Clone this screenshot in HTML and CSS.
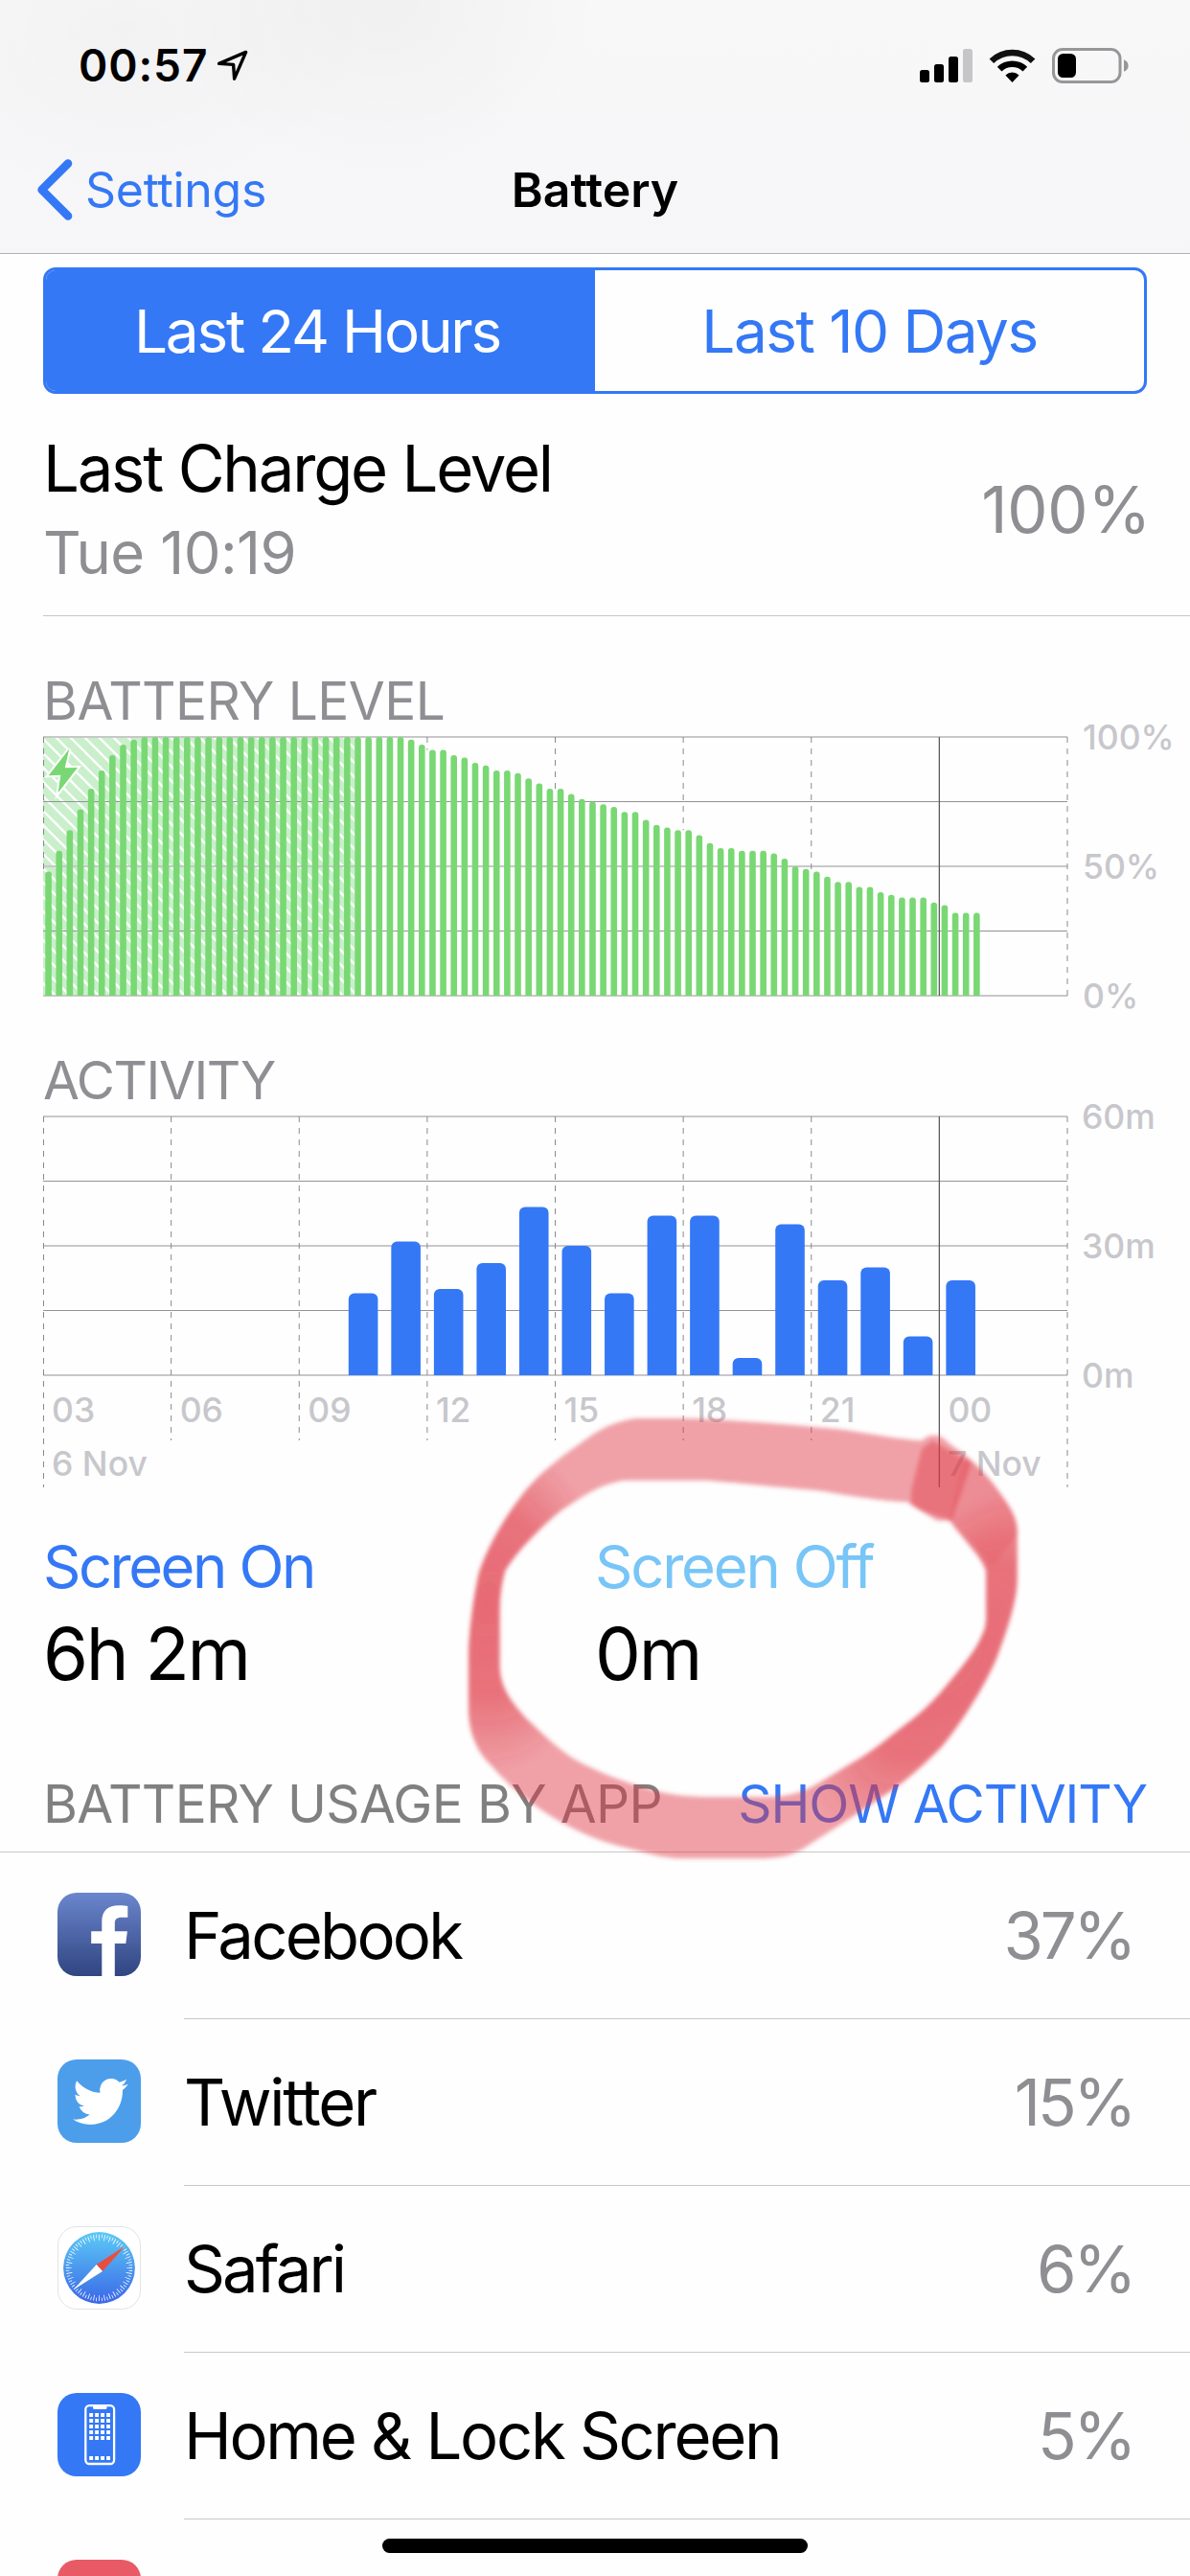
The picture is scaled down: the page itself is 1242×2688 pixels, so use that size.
FILE: index.html
```html
<!DOCTYPE html>
<html lang="en">
<head>
<meta charset="utf-8">
<title>Battery</title>
<link rel="stylesheet" href="styles.css">
</head>
<body>
<div class="screen">
  <header class="header">
    <div class="status">
      <div class="status-left">
        <span class="clock">00:57</span>
        <svg class="location" width="34" height="33" viewBox="0 0 34 33"><path d="M2.6 14.4 30.6 2.4 18.6 30.2 17.6 15.4Z" fill="none" stroke="#000" stroke-width="3.4" stroke-linejoin="round"/></svg>
      </div>
      <div class="status-right">
        <svg width="55" height="35" viewBox="0 0 55 35">
          <rect x="0" y="22" width="10" height="13" rx="2.5"/>
          <rect x="15" y="16" width="10" height="19" rx="2.5"/>
          <rect x="30" y="8" width="10" height="27" rx="2.5"/>
          <rect x="45" y="0" width="10" height="35" rx="2.5" fill="#c6c6c8"/>
        </svg>
        <svg class="wifi" width="49" height="37" viewBox="0 0 49 37">
          <path d="M0.6 11.4A34.5 34.5 0 0 1 48.4 11.4L43.8 16A28 28 0 0 0 5.2 16Z" fill="#111"/>
          <path d="M8.8 19.8A22.6 22.6 0 0 1 40.2 19.8L35.5 24.5A16 16 0 0 0 13.5 24.5Z"/>
          <path d="M17.4 28.4A10.4 10.4 0 0 1 31.6 28.4L24.5 36Z"/>
        </svg>
        <svg width="80" height="37" viewBox="0 0 80 37">
          <rect x="1.5" y="1.5" width="69.5" height="34" rx="9.5" fill="none" stroke="#979799" stroke-width="3"/>
          <rect x="6" y="6" width="19" height="25" rx="5.5"/>
          <path d="M75 12.2Q79.6 14.2 79.6 18.5 79.6 22.8 75 24.8Z" fill="#979799"/>
        </svg>
      </div>
    </div>
    <nav class="nav">
      <a class="back">
        <svg width="38" height="64" viewBox="0 0 38 64"><path d="M33 4.6 5.6 32 33 59.4" fill="none" stroke="#3478f6" stroke-width="8.6" stroke-linecap="round" stroke-linejoin="round"/></svg>
        <span>Settings</span>
      </a>
      <h1 class="nav-title">Battery</h1>
    </nav>
  </header>

  <main>
    <div class="segmented">
      <span class="segment segment-on">Last 24 Hours</span>
      <span class="segment segment-days">Last 10 Days</span>
    </div>

    <section class="charge">
      <div>
        <div class="charge-title">Last Charge Level</div>
        <div class="charge-time">Tue 10:19</div>
      </div>
      <div class="charge-value">100%</div>
    </section>

    <h2 class="chart-heading chart-heading-level">BATTERY LEVEL</h2>
    <svg class="chart" id="level-chart" width="1242" height="285" viewBox="0 768 1242 285"></svg>

    <h2 class="chart-heading chart-heading-activity">ACTIVITY</h2>
    <svg class="chart" id="activity-chart" width="1242" height="400" viewBox="0 1164 1242 400"></svg>

    <section class="usage">
      <div>
        <div class="usage-label">Screen On</div>
        <div class="usage-value">6h 2m</div>
      </div>
      <div>
        <div class="usage-label usage-label-off">Screen Off</div>
        <div class="usage-value">0m</div>
      </div>
    </section>

    <div class="list-header">
      <span>BATTERY USAGE BY APP</span>
      <a class="list-action">SHOW ACTIVITY</a>
    </div>

    <ul class="apps">
      <li class="app">
        <svg class="app-icon" viewBox="0 0 87 87">
          <defs><linearGradient id="fb" x2="0" y2="1"><stop offset="0" stop-color="#6b86cd"/><stop offset="1" stop-color="#304581"/></linearGradient></defs>
          <rect width="87" height="87" rx="20" fill="url(#fb)"/>
          <path d="M46.3 87V53H35.2V40.3H46.3V30C46.3 18.5 53 13.2 64 13.2 68.500 13.200 71.500 13.500 73.300 13.900V25.700H67C61.800 25.700 59.800 27.800 59.800 32V40.300H72.900L71.300 53H59.800V87Z" fill="#fff"/>
        </svg>
        <div class="app-body"><span class="name-facebook">Facebook</span><span class="app-share">37%</span></div>
      </li>
      <li class="app">
        <svg class="app-icon" viewBox="0 0 87 87">
          <rect width="87" height="87" rx="20" fill="#4c9eeb"/>
          <path transform="translate(16.2 14.4) scale(2.4 2.46)" fill="#fff" d="M23.953 4.57a10 10 0 01-2.825.775 4.958 4.958 0 002.163-2.723c-.951.555-2.005.959-3.127 1.184a4.92 4.92 0 00-8.384 4.482C7.69 8.095 4.067 6.13 1.64 3.162a4.822 4.822 0 00-.666 2.475c0 1.71.87 3.213 2.188 4.096a4.904 4.904 0 01-2.228-.616v.06a4.923 4.923 0 003.946 4.827 4.996 4.996 0 01-2.212.085 4.936 4.936 0 004.604 3.417 9.867 9.867 0 01-6.102 2.105c-.39 0-.779-.023-1.17-.067a13.995 13.995 0 007.557 2.209c9.053 0 13.998-7.496 13.998-13.985 0-.21 0-.42-.015-.63A9.935 9.935 0 0024 4.59z"/>
        </svg>
        <div class="app-body"><span>Twitter</span><span class="app-share">15%</span></div>
      </li>
      <li class="app">
        <svg class="app-icon" viewBox="0 0 87 87">
          <defs><linearGradient id="sf" x2="0" y2="1"><stop offset="0" stop-color="#5ccaf5"/><stop offset="1" stop-color="#3a67e8"/></linearGradient></defs>
          <rect x=".5" y=".5" width="86" height="86" rx="19.500" fill="#fff" stroke="#e3e3e5"/>
          <circle cx="43.500" cy="43.500" r="37.400" fill="url(#sf)"/>
          <circle cx="43.500" cy="43.500" r="31.600" fill="none" stroke="#fff" stroke-width="6" pathLength="360" stroke-dasharray="1.400 8.600" stroke-dashoffset=".7"/>
          <circle cx="43.500" cy="43.500" r="33" fill="none" stroke="#fff" stroke-width="3.600" pathLength="360" stroke-dasharray="1.300 8.700" stroke-dashoffset="-4.400"/>
          <path d="M70.500 20.700 40.700 40 47 47Z" fill="#e94e3d"/>
          <path d="M16.400 66.500 40.700 40 47 47Z" fill="#fff"/>
        </svg>
        <div class="app-body"><span class="name-safari">Safari</span><span class="app-share">6%</span></div>
      </li>
      <li class="app">
        <svg class="app-icon" viewBox="0 0 87 87">
          <rect width="87" height="87" rx="20" fill="#3478f6"/>
          <rect x="29.300" y="13.200" width="29.800" height="60.800" rx="4" fill="none" stroke="#fff" stroke-width="2.300"/>
          <path d="M37 13H51.500V15.500Q51.500 17 50 17H38.500Q37 17 37 15.500Z" fill="#fff"/>
          <g fill="none" stroke="#fff" stroke-width="4" stroke-dasharray="3.900 2.070">
            <path d="M33.200 23H55.500M33.200 29H55.500M33.200 35H55.500M33.200 41H55.500M33.200 47H55.500M33.200 68H55.500"/>
          </g>
        </svg>
        <div class="app-body"><span>Home &amp; Lock Screen</span><span class="app-share">5%</span></div>
      </li>
      <li class="app">
        <svg class="app-icon" viewBox="0 0 87 87"><rect width="87" height="87" rx="20" fill="#e85b66"/></svg>
        <div class="app-body"></div>
      </li>
    </ul>
  </main>

  <svg class="marker" width="640" height="560" viewBox="460 1440 640 560">
    <defs>
      <filter id="edge" x="-5%" y="-5%" width="110%" height="110%"><feGaussianBlur stdDeviation="2"/></filter>
      <radialGradient id="pressure">
        <stop offset="0" stop-color="#df3542" stop-opacity=".5"/>
        <stop offset=".55" stop-color="#df3542" stop-opacity=".42"/>
        <stop offset="1" stop-color="#df3542" stop-opacity="0"/>
      </radialGradient>
      <clipPath id="ring">
        <path id="ring-shape" clip-rule="evenodd" fill-rule="evenodd" d="M1125 190C1080 186 1020 172 940 155C800 138 660 122 560 120H460C400 128 360 165 330 195C270 250 225 300 190 360C150 430 110 520 90 600C78 665 66 780 65 860V1040C68 1120 90 1170 120 1210C165 1280 225 1345 290 1390C350 1435 400 1455 460 1473C500 1488 530 1497 560 1498H740C800 1498 825 1485 850 1465C920 1405 1000 1335 1060 1280C1110 1230 1140 1190 1170 1150C1220 1070 1275 950 1300 870C1325 780 1348 690 1348 620V470C1346 420 1325 385 1290 322C1265 280 1230 235 1190 200C1165 165 1145 165 1125 190ZM1090 382C1030 378 970 365 890 347C800 338 720 325 620 314H430C370 325 325 370 280 410C225 470 170 550 150 600C142 640 138 680 138 720V900C140 960 160 1000 200 1060C240 1110 270 1150 310 1185C370 1230 430 1260 500 1285C540 1300 580 1305 620 1305H770C810 1303 840 1295 880 1265C910 1240 935 1220 960 1200C1010 1165 1050 1115 1090 1075C1130 1035 1155 1000 1180 960C1215 905 1250 850 1265 800C1275 775 1275 750 1275 740V600C1270 560 1215 490 1190 440H1160Z"/>
      </clipPath>
    </defs>
    <g filter="url(#edge)">
      <g transform="translate(460 1440) scale(.4464 .3333)">
        <use href="#ring-shape" fill="#df3542" fill-opacity=".46"/>
        <g clip-path="url(#ring)">
          <ellipse cx="110" cy="700" rx="280" ry="540" fill="url(#pressure)"/>
          <ellipse rx="270" ry="610" transform="translate(1200 880) rotate(24.600)" fill="url(#pressure)"/>
          <path d="M1150 190 1240 260 1195 440 1100 400V345L1125 215Z" fill="#df3542" fill-opacity=".42"/>
          <path d="M1225 230 1400 400 1290 580 1190 440Z" fill="#df3542" fill-opacity=".2"/>
        </g>
      </g>
    </g>
  </svg>
  <div class="home-indicator"></div>
</div>
<script src="charts.js"></script>
</body>
</html>
```
FILE: styles.css
```css
* { box-sizing: border-box; margin: 0; padding: 0; }

body {
  background: #fff;
  color: #000;
  font-family: Inter, "Liberation Sans", sans-serif;
  font-kerning: normal;
}

.screen {
  position: relative;
  width: 1242px;
  height: 2688px;
  overflow: hidden;
  background: #fefefe;
}

svg { display: block; flex: none; }

/* header */
.header {
  height: 265px;
  border-bottom: 1px solid #b2b2b4;
  background:
    radial-gradient(ellipse 230px 190px at 400px 0, rgba(0, 0, 0, .03), transparent),
    radial-gradient(ellipse 260px 180px at 130px 30px, rgba(0, 0, 0, .025), transparent),
    linear-gradient(#f8f8f9, #f6f6f8);
}
.status {
  display: flex;
  justify-content: space-between;
  align-items: center;
  height: 136px;
  padding: 0 64px 0 82px;
}
.status-left, .status-right { display: flex; align-items: center; }
.status-left { gap: 9px; }
.status-right { gap: 17px; }
.clock { font-size: 46px; font-weight: 600; letter-spacing: .9px; }
.nav {
  display: grid;
  grid-template-columns: 1fr auto 1fr;
  align-items: center;
  height: 124px;
  padding: 0 38px;
}
.back {
  display: flex;
  align-items: center;
  gap: 13px;
  color: #3478f6;
  font-size: 50px;
  letter-spacing: -.3px;
}
.nav-title { font-size: 50px; font-weight: 600; letter-spacing: 0; }

/* range switch */
.segmented {
  display: grid;
  grid-template-columns: 1fr 1fr;
  height: 132px;
  margin: 14px 45px 0;
  border: 3px solid #3478f6;
  border-radius: 13px;
  overflow: hidden;
}
.segment {
  display: flex;
  align-items: center;
  justify-content: center;
  color: #3478f6;
  font-size: 62px;
  letter-spacing: -2.2px;
}
.segment-days { letter-spacing: -1.5px; }
.segment-on { background: #3478f6; color: #fff; padding-right: 7px; }

/* last charge */
.charge {
  display: flex;
  justify-content: space-between;
  align-items: center;
  height: 232px;
  margin-left: 45px;
  padding: 39px 41px 15px 0;
  border-bottom: 1px solid #c8c7cc;
}
.charge-title { font-size: 67px; line-height: 77px; letter-spacing: -2.2px; }
.charge-time { font-size: 61.5px; line-height: 100px; letter-spacing: -.6px; color: #8e8e93; }
.charge-value { font-size: 67px; line-height: 77px; letter-spacing: -.2px; color: #8e8e93; margin-top: -15px; }

/* charts */
.chart-heading {
  padding: 0 45px 12px;
  font-size: 55px;
  font-weight: 400;
  line-height: 50px;
  color: #8e8e93;
}
.chart-heading-level { padding-top: 63px; letter-spacing: -.55px; }
.chart-heading-activity { padding-top: 49px; letter-spacing: -1.4px; }
.chart { overflow: visible; }
.chart text { font-size: 35.5px; font-weight: 500; fill: #c7c7cc; }

/* screen on / off */
.usage {
  display: grid;
  grid-template-columns: 576px 1fr;
  padding: 31px 45px 0;
}
.usage-label { font-size: 61.5px; line-height: 80px; letter-spacing: -2.5px; color: #3478f6; }
.usage-label-off { color: #78c5f7; letter-spacing: -2.2px; }
.usage-value { font-size: 76px; line-height: 101px; letter-spacing: -2.3px; }

/* app list */
.list-header {
  display: flex;
  justify-content: space-between;
  padding: 76px 45px 20px;
  border-bottom: 1px solid #c8c7cc;
  font-size: 55px;
  line-height: 60px;
  letter-spacing: -.65px;
  color: #808080;
}
.list-action { color: #3478f6; letter-spacing: -1.1px; }
.apps { list-style: none; }
.app { display: flex; align-items: center; gap: 45px; height: 174px; padding-left: 60px; }
.app-icon { width: 87px; height: 87px; margin-bottom: 3px; }
.app-body {
  flex: 1;
  display: flex;
  align-items: center;
  justify-content: space-between;
  height: 174px;
  padding-right: 59px;
  border-bottom: 1px solid #c8c7cc;
  font-size: 67px;
  letter-spacing: -2.3px;
}
.name-facebook { letter-spacing: -2.7px; }
.name-safari { letter-spacing: -2.9px; }
.app-share { color: #8e8e93; letter-spacing: -3.2px; }

/* overlays */
.marker { position: absolute; left: 460px; top: 1440px; }
.home-indicator {
  position: absolute;
  left: 399px;
  bottom: 24px;
  width: 444px;
  height: 15px;
  border-radius: 8px;
  background: #000;
}
```
FILE: charts.js
```js
const LEFT = 45, RIGHT = 1114, HEIGHT = 270;
const STEP = (RIGHT - LEFT) / 8;

const level = [48, 56, 64, 72, 80, 87, 93, 97, 99]
  .concat(Array(25).fill(100))
  .concat([99, 97, 95, 95, 93, 92, 90, 89, 87, 87, 86, 84, 82, 80, 80, 78, 76, 75,
    74, 73, 71, 71, 68, 66, 65, 64, 64, 62, 59, 57, 57, 56, 56, 56, 55, 53, 50, 49,
    48, 46, 44, 44, 42, 42, 40, 39, 38, 38, 38, 36, 35, 32, 32, 32]);
const activity = [0, 0, 0, 0, 0, 0, 0, 19, 31, 20, 26, 39, 30, 19, 37, 37, 4, 35, 22, 25, 9, 22];

const bar = (x, y, w, h, r, fill) =>
  `<path d="M${x} ${y + h}V${y + r}a${r} ${r} 0 0 1 ${r} ${-r}h${w - 2 * r}a${r} ${r} 0 0 1 ${r} ${r}V${y + h}Z" fill="${fill}"/>`;

const rows = top => [0, 1, 2, 3, 4].map(i => {
  const y = top + Math.floor(i * HEIGHT / 4);
  return i % 2
    ? `<rect x="${LEFT}" y="${y}" width="${RIGHT - LEFT}" height="1" fill="#939396"/>`
    : `<rect x="${LEFT}" y="${y - 1}" width="${RIGHT - LEFT}" height="2" fill="#c8c8ca"/>`;
}).join('');

const dash = (x, y1, y2) =>
  `<path d="M${x} ${y1}V${y2}" stroke="#8a8a8e" stroke-width="1" stroke-dasharray="6 6"/>`;
const solid = (x, y1, y2) =>
  `<path d="M${x} ${y1}V${y2}" stroke="#5c5c60" stroke-width="1.3"/>`;
const label = (x, middle, text) => `<text x="${x}" y="${middle + 13}">${text}</text>`;

function drawLevel() {
  const top = 769, bottom = top + HEIGHT;
  let out = `<defs><pattern id="hatch" width="15" height="15" patternUnits="userSpaceOnUse" x="45" y="771">
    <rect width="15" height="15" fill="#c9efcb"/>
    <path d="M-2 -2 17 17M-2 13 2 17M13 -2 17 2" stroke="#fff" stroke-width="2.4"/></pattern></defs>
    <rect x="${LEFT}" y="${top}" width="325" height="${HEIGHT}" fill="url(#hatch)"/>`;
  out += rows(top);
  out += dash(LEFT + .5, top, 910);
  for (const i of [3, 4, 5, 6]) {
    const share = level[i * 12];
    out += dash(LEFT + i * STEP, top, bottom - share * 2.7);
  }
  out += dash(RIGHT, top, bottom);
  level.forEach((v, i) => {
    const x = LEFT + (i + .5) * STEP / 12 - 3.3;
    out += bar(x, bottom - v * 2.7, 6.6, v * 2.7, 3, '#79d873');
  });
  out += solid(LEFT + 7 * STEP, top, bottom);
  out += `<path d="M72.300 781.600 50.600 809.300 63.300 808.700 60.600 827.300 81 801 67.700 801.300Z" fill="#79d873" stroke="#fff" stroke-width="4" paint-order="stroke"/>`;
  out += label(1130, top, '100%') + label(1130, top + 135, '50%') + label(1130, bottom, '0%');
  document.getElementById('level-chart').innerHTML = out;
}

function drawActivity() {
  const top = 1165, bottom = top + HEIGHT;
  let out = rows(top);
  ['03', '06', '09', '12', '15', '18', '21', '00'].forEach((hour, i) => {
    const x = LEFT + i * STEP;
    if (i === 7) out += solid(x, top, 1552);
    else out += dash(i ? x : x + .5, top, i ? 1503 : 1552);
    out += label(x + 9, 1471, hour);
  });
  out += dash(RIGHT, top, 1552);
  activity.forEach((m, i) => {
    if (m) out += bar(LEFT + i * STEP / 3 + 7, bottom - m * 4.5, 30.6, m * 4.5, 6, '#3478f6');
  });
  out += label(54, 1527, '6 Nov') + label(989, 1527, '7 Nov');
  out += label(1129, top, '60m') + label(1129, top + 135, '30m') + label(1129, bottom, '0m');
  document.getElementById('activity-chart').innerHTML = out;
}

drawLevel();
drawActivity();
```
